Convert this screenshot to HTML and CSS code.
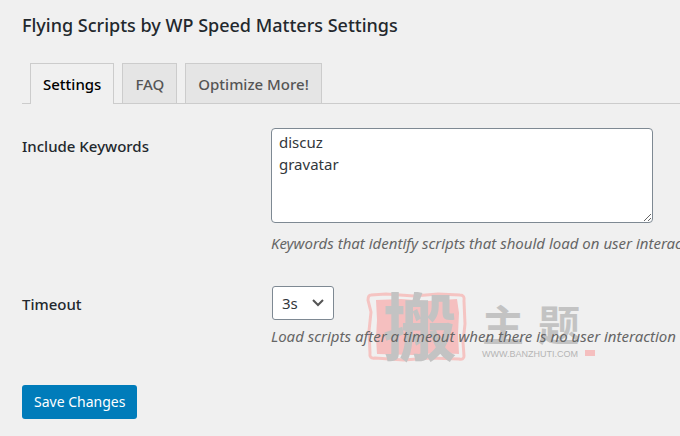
FILE: index.html
```
<!DOCTYPE html>
<html lang="en">
<head>
    <meta charset="UTF-8">
    <meta name="viewport" content="width=device-width, initial-scale=1.0">
    <title>Flying Scripts by WP Speed Matters Settings</title>
    <link rel="stylesheet" href="styles.css">
</head>
<body>
    <div class="wrap">
        <h2 class="page-title">Flying Scripts by WP Speed Matters Settings</h2>
        <nav class="nav-tabs">
            <a href="#settings" class="nav-tab active">Settings</a>
            <a href="#faq" class="nav-tab">FAQ</a>
            <a href="#optimize" class="nav-tab">Optimize More!</a>
        </nav>
        <form id="settings">
            <div class="form-row">
                <label for="keywords">Include Keywords</label>
                <div class="field">
                    <textarea id="keywords" name="keywords" rows="4">discuz
gravatar</textarea>
                    <p class="description">Keywords that identify scripts that should load on user interaction</p>
                </div>
            </div>
            <div class="form-row">
                <label for="timeout">Timeout</label>
                <div class="field">
                    <svg class="watermark" width="232" height="76" viewBox="0 0 232 76" aria-hidden="true">
                        <path class="seal-edge" d="M5 3 L20 2 L48 4 L72 2 L94 3 Q99 3 98 9 L99 32 L97 50 L98 64 Q98 68 93 67 L64 66 L38 68 L9 66 Q3 67 4 61 L3 39 L5 20 L2 8 Q2 3 5 3 Z"/>
                        <path class="seal" d="M10 8 L35 7 L61 9 L91 7 L93 21 L92 42 L93 62 L72 61 L47 63 L11 62 L10 46 L11 28 Z"/>
                        <text class="seal-char" x="17" y="63">搬</text>
                        <text class="name-char" x="116" y="49">主</text>
                        <text class="name-char" x="172" y="49">题</text>
                        <text class="site" x="116" y="65">WWW.BANZHUTI.COM</text>
                        <rect class="seal" x="219" y="58" width="10" height="6"/>
                    </svg>
                    <select id="timeout" name="timeout">
                        <option value="3">3s</option>
                        <option value="5">5s</option>
                        <option value="10">10s</option>
                    </select>
                    <p class="description">Load scripts after a timeout when there is no user interaction</p>
                </div>
            </div>
            <button type="submit" class="button-primary">Save Changes</button>
        </form>
    </div>
</body>
</html>
```
FILE: styles.css
```
body {
    margin: 0;
    background: #f0f0f0;
    color: #23282d;
    font-family: "Noto Sans", "Open Sans", sans-serif;
    font-size: 15px;
    line-height: 22px;
    overflow: hidden;
}

.wrap {
    padding: 14px 0 16px 22px;
}

.page-title {
    margin: 0 0 26px;
    font-size: 18px;
    font-weight: 500;
    line-height: 23px;
}

.nav-tabs {
    display: flex;
    gap: 8px;
    padding-left: 8px;
    border-bottom: 1px solid #ccc;
}

.nav-tab {
    padding: 9px 12px 8px;
    border: 1px solid #ccc;
    border-bottom: none;
    background: #e5e5e5;
    color: #555;
    font-weight: 500;
    line-height: 22px;
    text-decoration: none;
}

.nav-tab.active {
    margin-bottom: -1px;
    padding-bottom: 9px;
    background: #f0f0f0;
    color: #000;
}

.form-row {
    display: flex;
    margin-top: 24px;
}

.form-row + .form-row {
    margin-top: 32px;
}

.form-row label {
    flex: 0 0 249px;
    padding-top: 7px;
    font-weight: 500;
}

.field {
    position: relative;
    flex: 1;
    min-width: 0;
}

textarea {
    display: block;
    width: 382px;
    max-width: 100%;
    padding: 2px 7px 3px;
    box-sizing: border-box;
    border: 1px solid #7e8993;
    border-radius: 4px;
    background: #fff;
    color: #32373c;
    font: inherit;
}

select {
    display: block;
    width: 62px;
    height: 34px;
    margin-left: 1px;
    padding: 0 9px;
    border: 1px solid #7e8993;
    border-radius: 3px;
    appearance: none;
    background: #fff url("data:image/svg+xml,%3Csvg xmlns='http://www.w3.org/2000/svg' width='14' height='10' viewBox='0 0 14 10'%3E%3Cpath d='M2 2l5 5 5-5' fill='none' stroke='%23555' stroke-width='2'/%3E%3C/svg%3E") no-repeat right 8px center;
    color: #32373c;
    font: inherit;
}

.description {
    position: relative;
    margin: 9px 0 0;
    color: #666;
    font-style: italic;
    white-space: nowrap;
}

select + .description {
    margin-top: 5px;
}

/* sits behind the field text */
.watermark {
    position: absolute;
    top: 6px;
    left: 95px;
}

.seal {
    fill: #f5bfbf;
}

.seal-edge {
    fill: none;
    stroke: #f5c4c2;
    stroke-width: 3;
}

.seal-char,
.name-char {
    fill: #c3c3c3;
    font-family: "Noto Sans CJK SC", sans-serif;
    font-weight: 700;
}

.seal-char {
    font-size: 74px;
}

.name-char {
    font-size: 42px;
}

.site {
    fill: #b5b5b5;
    font-family: "Liberation Sans", sans-serif;
    font-size: 9px;
}

.button-primary {
    margin-top: 38px;
    padding: 6px 12px;
    border: none;
    border-radius: 3px;
    background: #007cba;
    color: #fff;
    font: inherit;
    font-size: 14px;
    cursor: pointer;
}
```
